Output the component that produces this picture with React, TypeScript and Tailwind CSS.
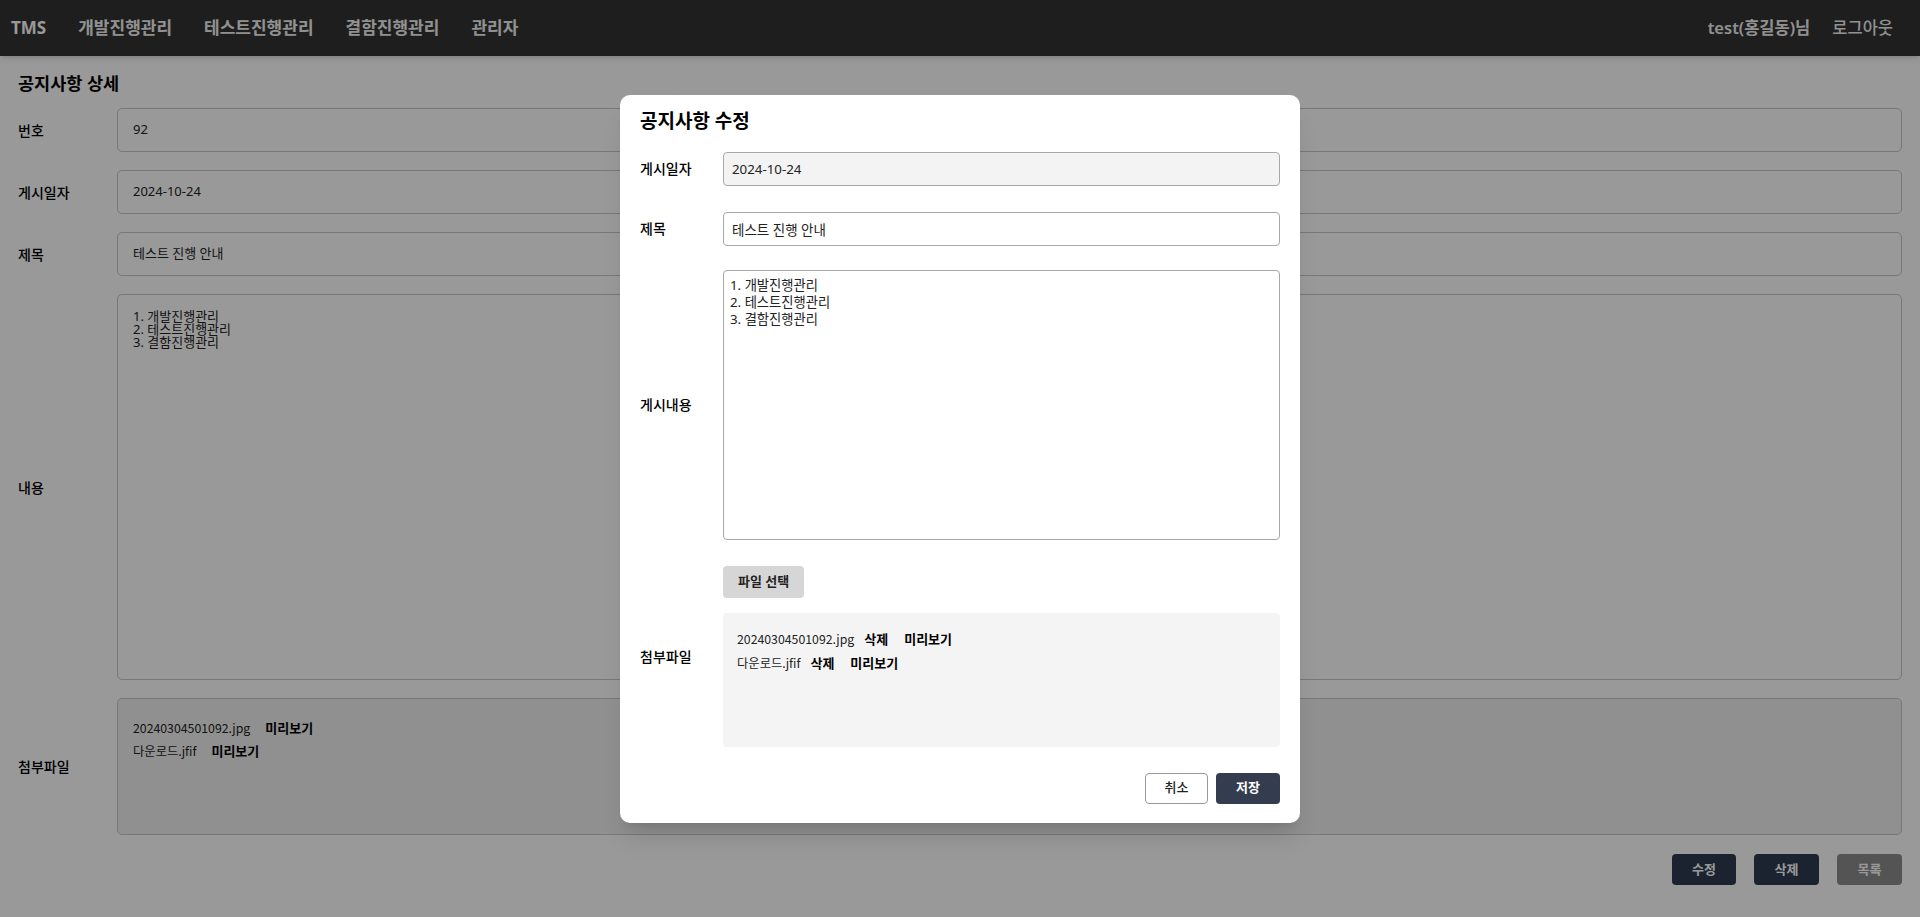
import React from "react";

const FONT = "font-['Noto_Sans','Noto_Sans_CJK_KR',sans-serif]";
const FILE_FONT = "font-['Noto_Sans_CJK_KR','Noto_Sans',sans-serif]";

const menus = ["개발진행관리", "테스트진행관리", "결함진행관리", "관리자"];

const files = [
  { name: "20240304501092.jpg" },
  { name: "다운로드.jfif" },
];

function DetailRow({
  label,
  children,
  boxClass,
}: {
  label: string;
  children: React.ReactNode;
  boxClass: string;
}) {
  return (
    <div className="flex items-center mb-[18px]">
      <div className="w-[99px] shrink-0 text-[14px] font-medium text-black">{label}</div>
      <div
        className={`flex-1 border border-[#c8c8c8] rounded-[5px] px-[15px] text-[13px] text-[#222] ${boxClass}`}
      >
        {children}
      </div>
    </div>
  );
}

function ModalRow({
  label,
  children,
  className,
}: {
  label: string;
  children: React.ReactNode;
  className: string;
}) {
  return (
    <div className={`flex items-center ${className}`}>
      <div className="w-[83px] shrink-0 text-[14px] font-medium text-black">{label}</div>
      <div className="flex-1">{children}</div>
    </div>
  );
}

export default function App() {
  return (
    <div className={`relative h-[917px] overflow-hidden bg-white ${FONT}`}>
      <nav className="h-14 bg-[#333] flex items-center justify-between pl-[11px] pr-[27px] shadow-md">
        <div className="flex items-center">
          <span className="text-white font-bold text-[17px] mr-[32px]">TMS</span>
          <div className="flex items-center gap-[32px]">
            {menus.map((m) => (
              <span key={m} className="text-[#f2f2f2] font-semibold text-[17px]">
                {m}
              </span>
            ))}
          </div>
        </div>
        <div className="flex items-center gap-[22px] text-[16.5px] text-[#f2f2f2]">
          <span className="font-semibold">test(홍길동)님</span>
          <span className="font-medium">로그아웃</span>
        </div>
      </nav>

      <main className="px-[18px] pt-[16px]">
        <h1 className="text-[17.5px] leading-[22px] font-semibold text-black mb-[14px]">
          공지사항 상세
        </h1>
        <DetailRow label="번호" boxClass="h-[44px] flex items-center">
          92
        </DetailRow>
        <DetailRow label="게시일자" boxClass="h-[44px] flex items-center">
          2024-10-24
        </DetailRow>
        <DetailRow label="제목" boxClass="h-[44px] flex items-center text-[13.5px]">
          테스트 진행 안내
        </DetailRow>
        <DetailRow label="내용" boxClass="h-[386px] py-[15px] leading-[13px] whitespace-pre-line">
          {"1. 개발진행관리\n2. 테스트진행관리\n3. 결함진행관리"}
        </DetailRow>
        <div className="flex items-center mb-[19px]">
          <div className="w-[99px] shrink-0 text-[14px] font-medium text-black">첨부파일</div>
          <div className="flex-1 h-[137px] border border-[#c8c8c8] rounded-[5px] bg-[#f0f0f0] px-[15px] py-[17px] text-[#222]">
            {files.map((f) => (
              <div key={f.name} className="leading-[22px]">
                <span className={`${FILE_FONT} text-[12.3px]`}>{f.name}</span>
                <span className="ml-[15px] text-[13px] font-bold text-black">미리보기</span>
              </div>
            ))}
          </div>
        </div>
        <div className="flex justify-end gap-[18px]">
          <button className="w-[64px] h-[31px] rounded-[4px] bg-[#2d3a50] text-white text-[13px] font-bold">
            수정
          </button>
          <button className="w-[65px] h-[31px] rounded-[4px] bg-[#2d3a50] text-white text-[13px] font-bold">
            삭제
          </button>
          <button className="w-[65px] h-[31px] rounded-[4px] bg-[#8c8c8c] text-white text-[13px] font-bold">
            목록
          </button>
        </div>
      </main>

      <div className="absolute inset-0 bg-black/40 flex items-center justify-center">
        <div className="w-[680px] bg-white rounded-[10px] shadow-xl px-[20px] pt-[14px] pb-[19px]">
          <h2 className="text-[19px] leading-[24px] font-bold text-black mb-[19px]">
            공지사항 수정
          </h2>
          <ModalRow label="게시일자" className="mb-[26px]">
            <input
              readOnly
              value="2024-10-24"
              className="w-full h-[34px] rounded-[4px] border border-[#a8a8a8] bg-[#f3f3f3] px-[8px] text-[13.3px] text-[#222] outline-none"
            />
          </ModalRow>
          <ModalRow label="제목" className="mb-[24px]">
            <input
              readOnly
              value="테스트 진행 안내"
              className="w-full h-[34px] rounded-[4px] border border-[#a8a8a8] bg-white px-[8px] text-[13.5px] text-[#222] outline-none"
            />
          </ModalRow>
          <ModalRow label="게시내용" className="mb-[26px]">
            <textarea
              readOnly
              value={"1. 개발진행관리\n2. 테스트진행관리\n3. 결함진행관리"}
              className="block w-full h-[270px] rounded-[4px] border border-[#a8a8a8] bg-white px-[6px] py-[6px] text-[13.3px] leading-[17px] text-[#222] resize-none outline-none"
            />
          </ModalRow>
          <ModalRow label="첨부파일" className="mb-[26px]">
            <button className="h-[32px] px-[15px] rounded-[4px] bg-[#d6d6d6] text-[13px] font-bold text-[#222] mb-[15px]">
              파일 선택
            </button>
            <div className="h-[134px] rounded-[4px] bg-[#f4f4f4] px-[14px] py-[14px] text-[#222]">
              {files.map((f) => (
                <div key={f.name} className="leading-[22px] mb-[1px]">
                  <span className={`${FILE_FONT} text-[12.3px]`}>{f.name}</span>
                  <span className="ml-[10px] text-[13px] font-bold text-black">삭제</span>
                  <span className="ml-[16px] text-[13px] font-bold text-black">미리보기</span>
                </div>
              ))}
            </div>
          </ModalRow>
          <div className="flex justify-end gap-[8px]">
            <button className="w-[63px] h-[31px] rounded-[4px] border border-[#999] bg-white text-[13px] font-medium text-[#222]">
              취소
            </button>
            <button className="w-[64px] h-[31px] rounded-[4px] bg-[#333d4f] text-[13px] font-bold text-white">
              저장
            </button>
          </div>
        </div>
      </div>
    </div>
  );
}
